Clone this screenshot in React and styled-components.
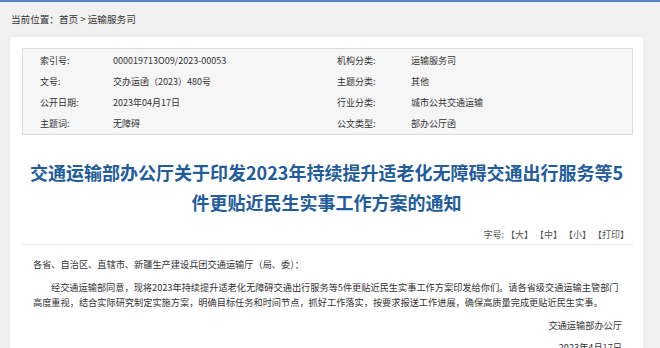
import React from "react";
import styled, { createGlobalStyle } from "styled-components";

const GlobalStyle = createGlobalStyle`
  html, body {
    margin: 0;
    padding: 0;
    background: #f1f1f1;
    font-family: "Noto Sans CJK SC", "Noto Sans", sans-serif;
    color: #333;
    overflow: hidden;
  }
`;

const meta = [
  ["索引号:", "000019713O09/2023-00053", "机构分类:", "运输服务司"],
  ["文号:", "交办运函（2023）480号", "主题分类:", "其他"],
  ["公开日期:", "2023年04月17日", "行业分类:", "城市公共交通运输"],
  ["主题词:", "无障碍", "公文类型:", "部办公厅函"],
];

const App = () => {
  return (
    <Page>
      <GlobalStyle />
      <TopBar />
      <Crumb>当前位置：首页 &gt; 运输服务司</Crumb>
      <Card>
        <MetaTable>
          {meta.map((row, i) => (
            <MetaRow key={i}>
              {row.map((cell, j) => (
                <MetaCell key={j}>{cell}</MetaCell>
              ))}
            </MetaRow>
          ))}
        </MetaTable>
        <Title>
          交通运输部办公厅关于印发2023年持续提升适老化无障碍交通出行服务等5件更贴近民生实事工作方案的通知
        </Title>
        <Tools>字号: 【大】 【中】 【小】 【打印】</Tools>
        <Body>
          <Para>各省、自治区、直辖市、新疆生产建设兵团交通运输厅（局、委）：</Para>
          <Para indent>
            经交通运输部同意，现将2023年持续提升适老化无障碍交通出行服务等5件更贴近民生实事工作方案印发给你们。请各省级交通运输主管部门高度重视，结合实际研究制定实施方案，明确目标任务和时间节点，抓好工作落实，按要求报送工作进展，确保高质量完成更贴近民生实事。
          </Para>
          <Sign>交通运输部办公厅</Sign>
          <Sign>2023年4月17日</Sign>
        </Body>
      </Card>
    </Page>
  );
};

const Page = styled.div`
  width: 660px;
  height: 348px;
  overflow: hidden;
  display: flex;
  flex-direction: column;
`;

const TopBar = styled.div`
  height: 2px;
  background: #5a84bd;
  border-bottom: 1px solid #e4ebf4;
  flex-shrink: 0;
`;

const Crumb = styled.div`
  padding: 9px 11px 0;
  font-size: 9.6px;
  line-height: 14px;
  color: #333;
`;

const Card = styled.div`
  margin: 11px 17px 0 10px;
  background: #fff;
  padding: 11px 10px 0 12px;
  box-shadow: 0 0 4px rgba(0, 0, 0, 0.04);
  flex: 1;
`;

const MetaTable = styled.div`
  background: #f6f6f6;
  border: 1px solid #dcdcdc;
  padding: 1px 0 0 17px;
`;

const MetaRow = styled.div`
  display: grid;
  grid-template-columns: 73px 224px 74px 1fr;
  height: 21px;
  align-items: center;
`;

const MetaCell = styled.div`
  font-size: 9px;
  color: #333;
  white-space: nowrap;
`;

const Title = styled.h1`
  margin: 22px 0 0;
  padding: 0 2px 0 0;
  font-size: 18px;
  line-height: 30px;
  font-weight: 700;
  color: #225c9b;
  text-align: center;
`;

const Tools = styled.div`
  margin-top: 10px;
  padding-right: 4px;
  font-size: 9px;
  line-height: 15px;
  color: #555;
  text-align: right;
  padding-bottom: 2px;
  border-bottom: 1px solid #eeeeee;
  box-shadow: 0 1px 2px rgba(0, 0, 0, 0.03);
`;

const Body = styled.div`
  padding: 12px 0 0 11px;
  width: 589px;
`;

const Para = styled.p`
  margin: 0 0 8px;
  font-size: 9.2px;
  line-height: 15px;
  color: #333;
  text-indent: ${(props) => (props.indent ? "18px" : "0")};
`;

const Sign = styled.p`
  margin: 0 0 7px;
  font-size: 9.2px;
  line-height: 15px;
  color: #333;
  text-align: right;
`;

export default App;
